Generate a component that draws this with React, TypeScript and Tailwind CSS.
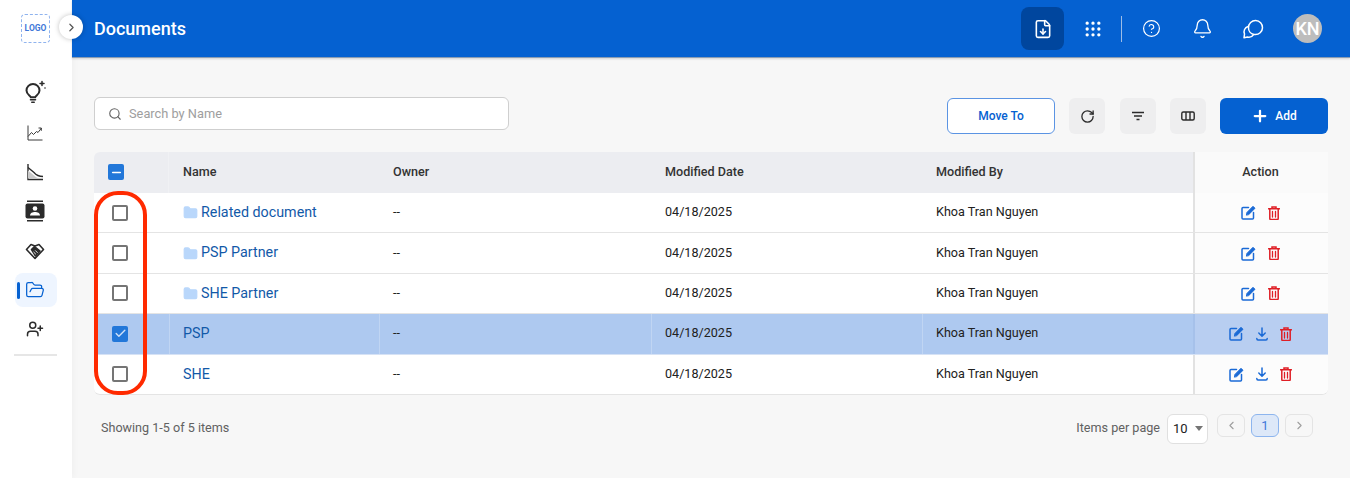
import React from 'react';
import { ChevronRight, ChevronLeft, Search, RotateCw, Plus, FolderOpen, UserPlus, CircleHelp, Bell, Grip, FileDown, Folder, Minus, Check } from 'lucide-react';

const rows = [
  { name: 'Related document', folder: true },
  { name: 'PSP Partner', folder: true },
  { name: 'SHE Partner', folder: true },
  { name: 'PSP', selected: true },
  { name: 'SHE' },
];

const Bulb = () => (
  <svg width="24" height="24" viewBox="0 0 24 24" fill="none" stroke="#2b2b2b" strokeWidth="2" strokeLinecap="round">
    <path d="M7.800 17.200C7.300 15.500 3.500 14.500 3.500 10.500a6.500 6.500 0 0 1 13 0c0 4-3.800 5-4.300 6.700z" />
    <path d="M7.500 19.800h5M8.800 22.300h2.400" strokeWidth="1.600" />
    <path d="M19 1.500v4M17 3.500h4" strokeWidth="1.500" />
    <circle cx="22" cy="8" r=".8" fill="#2b2b2b" stroke="none" />
  </svg>
);

const Trend = () => (
  <svg width="18" height="18" viewBox="0 0 18 18" fill="none" stroke="#3a3a3a" strokeWidth="1">
    <path d="M2 1.500V16h14.500M2 12.500l3.500-4 2 2 3-3 1.500 1 3.500-4.500M12.500 4H15.300v2.800" />
  </svg>
);

const Decline = () => (
  <svg width="18" height="18" viewBox="0 0 18 18" fill="none" stroke="#2b2b2b" strokeWidth="1.400">
    <path d="M2 1v15.500h15" />
    <path d="M2 4.500 8 9.500c2 2.500 4 4 9 4" />
    <path d="M2 7.500 7.500 12c1.500 1.500 3 2.500 5 3.500H2z" fill="#c9c9c9" stroke="none" />
  </svg>
);

const Contact = () => (
  <svg width="20" height="24" viewBox="0 0 20 24" fill="#2b2b2b">
    <rect x="2" y="1.500" width="16" height="1.500" />
    <rect x="2" y="21" width="16" height="1.500" />
    <rect x="0.500" y="4.500" width="19" height="15" rx="2" />
    <circle cx="10" cy="9.500" r="2.300" fill="#fff" />
    <path d="M5 16.500c0-2.500 2.500-3.500 5-3.500s5 1 5 3.500z" fill="#fff" />
  </svg>
);

const Deal = () => (
  <svg width="22" height="22" viewBox="0 0 22 22" fill="none" stroke="#2b2b2b" strokeWidth="1.600" strokeLinejoin="round" strokeLinecap="round">
    <path d="M2.500 10.500 7 5.500l4 1.500 4-1.500 4.500 5-8.500 9z" />
    <path d="m7.500 10.500 3-3 5.500 4.500-4.500 5z" fill="#2b2b2b" />
    <path d="m9.800 13.200 1.800 1.800M11.500 11.700l1.800 1.800" stroke="#fff" strokeWidth=".9" />
  </svg>
);

const Chat = () => (
  <svg width="22" height="22" viewBox="0 0 22 22" fill="none" stroke="#fff" strokeWidth="1.500" strokeLinejoin="round">
    <path d="M6.500 9.500a7 7 0 1 1 6.500 7l-1 .1a7 7 0 0 1-5.500-7.100z" />
    <path d="M6 8.500a5.500 5.500 0 0 0-3.500 7.500L2 19.800l3.500-.7a5.500 5.500 0 0 0 6-2.500" />
  </svg>
);

const EditIcon = () => (
  <svg width="15" height="15" viewBox="0 0 15 15" fill="none" stroke="#1a6ad6" strokeWidth="1.500" strokeLinecap="round">
    <path d="M7.500 2.500H2a1 1 0 0 0-1 1V13a1 1 0 0 0 1 1h9.500a1 1 0 0 0 1-1V7.500" />
    <path d="M5.500 9.800 6 7.400 12 1.300l2 2-6 6z" fill="#1a6ad6" stroke="#1a6ad6" strokeWidth="1" strokeLinejoin="round" />
  </svg>
);

const DownloadIcon = () => (
  <svg width="12" height="14" viewBox="0 0 12 14" fill="none" stroke="#1a6ad6" strokeWidth="1.500" strokeLinecap="round" strokeLinejoin="round">
    <path d="M6 1v8M2.800 6 6 9.200 9.200 6" />
    <path d="M.8 11.500c0 1 .5 1.500 1.200 1.500h8c.7 0 1.200-.5 1.200-1.500" />
  </svg>
);

const TrashIcon = () => (
  <svg width="12" height="14" viewBox="0 0 12 14" fill="none" stroke="#df1f26" strokeWidth="1.500" strokeLinecap="round">
    <path d="M.5 2.800h11M4 2.500V1h4v1.500" />
    <path d="M1.800 3v9.500a1 1 0 0 0 1 1h6.400a1 1 0 0 0 1-1V3" />
    <path d="M4.500 5.500v5.500M7.500 5.500v5.500" strokeWidth="1.300" />
  </svg>
);

const Logo = () => (
  <div className="w-[29px] h-[29px] mr-[1px] rounded-[4px] border border-dashed border-[#8fb3ee] flex items-center justify-center text-[8.500px] font-bold text-[#3f78d8]">
    LOGO
  </div>
);

const Box = ({ state }: { state?: 'check' | 'minus' }) =>
  state ? (
    <div className="w-4 h-4 rounded-[2px] bg-[#2277d9] flex items-center justify-center">
      {state === 'check' ? <Check size={13} strokeWidth={2.600} color="#cfe0f7" /> : <Minus size={13} strokeWidth={3} color="#fff" />}
    </div>
  ) : (
    <div className="w-4 h-4 rounded-[2px] border-2 border-[#757575] bg-white" />
  );

const navItems = [
  { icon: <Bulb />, h: 'h-[40px]' },
  { icon: <Trend />, h: 'h-[41px]' },
  { icon: <Decline />, h: 'h-[38px]' },
  { icon: <Contact />, h: 'h-[39px]' },
  { icon: <Deal />, h: 'h-[39px]' },
];

const Sidebar = () => (
  <aside className="w-[72px] shrink-0 bg-white flex flex-col items-center pt-[14px] shadow-[2px_0_6px_rgba(0,0,0,0.03)]">
    <Logo />
    <div className="mt-[29px] w-full flex flex-col items-center">
      {navItems.map((n, i) => (
        <div key={i} className={`${n.h} w-full pr-[2px] flex items-center justify-center`}>
          {n.icon}
        </div>
      ))}
      <div className="mt-[4px] w-[42px] h-[34px] mr-[1px] rounded-lg bg-[#eef5ff] flex items-center">
        <div className="w-[3px] h-[17px] ml-[2px] rounded-full bg-[#0561d1]" />
        <FolderOpen size={20} strokeWidth={1.5} color="#0561d1" className="ml-[5px]" />
      </div>
      <div className="mt-[5px] h-[34px] w-full pr-[2px] flex items-center justify-center">
        <UserPlus size={18} strokeWidth={2} color="#2b2b2b" />
      </div>
      <div className="mt-[8px] w-[43px] h-[2px] mr-[1px] bg-[#e6e6e6]" />
    </div>
  </aside>
);

const Header = () => (
  <header className="h-[58px] shrink-0 bg-[#0561d1] border-b border-[#8b9db3] shadow-[0_1px_2px_rgba(0,0,0,0.15)] flex items-center pl-[22px] pr-[28px] text-white">
    <h1 className="text-[18px] font-medium">Documents</h1>
    <div className="ml-auto flex items-center">
      <div className="w-[43px] h-[43px] rounded-lg bg-[#00469e] flex items-center justify-center">
        <FileDown size={20} strokeWidth={1.9} />
      </div>
      <div className="ml-[18px] w-[21px] flex justify-center">
        <Grip size={20} strokeWidth={2} />
      </div>
      <div className="ml-[18px] w-px h-[26px] bg-[#9dbde6]" />
      <CircleHelp size={19} strokeWidth={1.5} className="ml-[20px]" />
      <Bell size={21} strokeWidth={1.5} className="ml-[31px]" />
      <div className="ml-[29px]"><Chat /></div>
      <div className="ml-[29px] w-[29px] h-[29px] rounded-full bg-[#bdbdbd] flex items-center justify-center text-[18px] font-medium">KN</div>
    </div>
  </header>
);

const Toolbar = () => (
  <div className="flex items-start">
    <div className="w-[415px] h-[33px] rounded-md border border-[#cfcfcf] bg-white flex items-center pl-[13px] text-[12.800px] text-[#9e9e9e]">
      <Search size={14} strokeWidth={1.9} color="#616161" />
      <span className="ml-[7px]">Search by Name</span>
    </div>
    <div className="ml-auto flex items-center mt-px">
      <button className="w-[108px] h-[36px] rounded-md border border-[#5b94e3] bg-white text-[12px] font-medium text-[#0561d1]">Move To</button>
      <button className="ml-[14px] w-[36px] h-[36px] rounded-md bg-[#eeeeef] flex items-center justify-center"><RotateCw size={15} strokeWidth={2.100} color="#2b2b2b" /></button>
      <button className="ml-[15px] w-[36px] h-[36px] rounded-md bg-[#eeeeef] flex items-center justify-center">
        <svg width="14" height="14" viewBox="0 0 14 14" stroke="#2b2b2b" strokeWidth="1.300"><path d="M1 3.500h12M3 7h8M5.500 10.500h3" /></svg>
      </button>
      <button className="ml-[14px] w-[36px] h-[36px] rounded-md bg-[#eeeeef] flex items-center justify-center">
        <svg width="14" height="14" viewBox="0 0 14 14" fill="none" stroke="#2b2b2b" strokeWidth="1.400"><rect x=".8" y="3" width="12.400" height="8" rx="1.500" /><path d="M5 3v8M9 3v8" /></svg>
      </button>
      <button className="ml-[14px] w-[108px] h-[36px] rounded-md bg-[#0561d1] flex items-center justify-center text-[12px] font-medium text-white">
        <Plus size={18} strokeWidth={3} />
        <span className="ml-[6px]">Add</span>
      </button>
    </div>
  </div>
);

const grid = 'grid grid-cols-[75px_210px_272px_271px_271px_135px]';

const Table = () => (
  <div className="relative mt-[18px] text-[12.600px] text-[#212121]">
    <div className={`${grid} h-[41px] items-center font-medium text-[#333]`}>
      <div className="h-full bg-[#ecedf1] rounded-tl-md pl-[14px] pb-px flex items-center border-r border-[#f0f1f4]"><Box state="minus" /></div>
      <div className="h-full bg-[#ecedf1] pl-[14px] pb-px flex items-center">Name</div>
      <div className="h-full bg-[#ecedf1] pl-[14px] pb-px flex items-center">Owner</div>
      <div className="h-full bg-[#ecedf1] pl-[14px] pb-px flex items-center">Modified Date</div>
      <div className="h-full bg-[#ecedf1] pl-[14px] pb-px flex items-center">Modified By</div>
      <div className="h-full bg-[#fafafa] border-l-2 border-[#e2e2e2] pb-px pr-[2px] flex items-center justify-center">Action</div>
    </div>
    {rows.map((r, i) => {
      const bg = r.selected ? 'bg-[#aec9f0] border-[#d6e2f5]' : 'bg-white border-[#e4e4e4]';
      const cell = `h-full pl-[13px] flex items-center border-l ${r.selected ? 'border-[#c0d5f3]' : 'border-transparent'}`;
      const last = i === rows.length - 1;
      return (
        <div key={r.name} className={`${grid} h-[40.400px] items-center border-b ${bg} ${last ? 'rounded-b-md' : ''}`}>
          <div className="h-full pl-[18px] flex items-center"><Box state={r.selected ? 'check' : undefined} /></div>
          <div className={cell}>
            {r.folder && <Folder size={15} fill="#b9d7fb" stroke="#b9d7fb" className="mr-[3px]" />}
            <span className="text-[14.300px] text-[#1259a8]">{r.name}</span>
          </div>
          <div className={cell}>--</div>
          <div className={cell}>04/18/2025</div>
          <div className={cell}>Khoa Tran Nguyen</div>
          <div className={`h-full border-l-2 pr-[3px] flex items-center justify-center gap-[12px] ${last ? 'rounded-br-md' : ''} ${r.selected ? 'bg-[#b8cef1] border-[#a6c1ea]' : 'bg-[#fcfcfc] border-[#e2e2e2]'}`}>
            <EditIcon />
            {!r.folder && <DownloadIcon />}
            <TrashIcon />
          </div>
        </div>
      );
    })}
    <div className="absolute left-0 top-[39px] w-[53px] h-[204px] rounded-[24px] border-[4.500px] border-[#ff2a00] pointer-events-none" />
  </div>
);

const Footer = () => (
  <div className="mt-[19px] flex items-start text-[12.600px] text-[#616161]">
    <span className="ml-[7px] mt-[5px]">Showing 1-5 of 5 items</span>
    <div className="ml-auto mr-[15px] flex items-start">
      <span className="mt-[5px]">Items per page</span>
      <div className="ml-[7px] w-[41px] h-[30px] rounded-md border border-[#e0e0e0] bg-white flex items-center pl-[5px] text-[13px] text-[#212121]">
        10
        <span className="ml-[7px] border-x-[4px] border-t-[5px] border-x-transparent border-t-[#757575]" />
      </div>
      <div className="ml-[9px] w-[28px] h-[23px] rounded-md border border-[#e4e4e4] flex items-center justify-center"><ChevronLeft size={13} color="#9e9e9e" /></div>
      <div className="ml-[6px] w-[28px] h-[23px] rounded-md border border-[#8db5ee] bg-[#dde8f8] flex items-center justify-center text-[13px] text-[#3f78d8]">1</div>
      <div className="ml-[6px] w-[28px] h-[23px] rounded-md border border-[#e4e4e4] flex items-center justify-center"><ChevronRight size={13} color="#9e9e9e" /></div>
    </div>
  </div>
);

export default function App() {
  return (
    <div className="relative w-[1350px] h-[478px] overflow-hidden flex bg-[#f7f7f7] font-['Roboto',sans-serif]">
      <Sidebar />
      <div className="flex-1 flex flex-col min-w-0">
        <Header />
        <main className="flex-1 pl-[22px] pr-[22px] pt-[39px]">
          <Toolbar />
          <Table />
          <Footer />
        </main>
      </div>
      <button className="absolute left-[59px] top-[15px] w-[24px] h-[24px] rounded-full bg-white shadow-[0_0_5px_rgba(0,0,0,0.25)] flex items-center justify-center">
        <ChevronRight size={13} strokeWidth={2.200} color="#555" />
      </button>
    </div>
  );
}
